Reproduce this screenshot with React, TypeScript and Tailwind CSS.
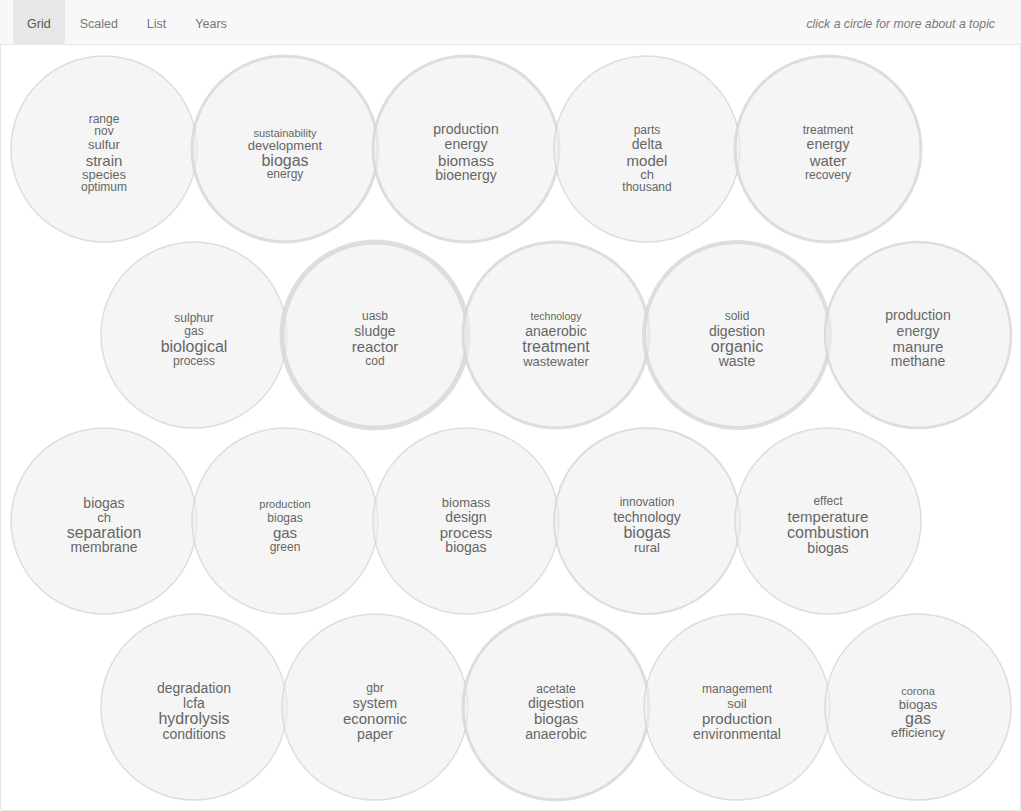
import React from "react";

type W = [string, number, number];
type C = { x: number; y: number; sw: number; words: W[] };

const circles: C[] = [
  { x: 104, y: 149, sw: 1.5, words: [["range", 119, 12], ["nov", 131, 12], ["sulfur", 144, 13], ["strain", 160, 15], ["species", 174, 13], ["optimum", 187, 12]] },
  { x: 285, y: 149, sw: 3, words: [["sustainability", 133, 11], ["development", 145, 13], ["biogas", 160, 16], ["energy", 174, 12]] },
  { x: 466, y: 149, sw: 3, words: [["production", 129, 14], ["energy", 144, 14], ["biomass", 160, 15], ["bioenergy", 175, 14]] },
  { x: 647, y: 149, sw: 1.5, words: [["parts", 130, 12], ["delta", 144, 14], ["model", 160, 15], ["ch", 174, 13], ["thousand", 187, 12]] },
  { x: 828, y: 149, sw: 3, words: [["treatment", 130, 12], ["energy", 144, 14], ["water", 160, 15], ["recovery", 175, 12]] },

  { x: 194, y: 335, sw: 1.5, words: [["sulphur", 318, 12], ["gas", 331, 12], ["biological", 346, 16], ["process", 361, 12]] },
  { x: 375, y: 335, sw: 5, words: [["uasb", 316, 12], ["sludge", 331, 14], ["reactor", 346, 15], ["cod", 361, 12]] },
  { x: 556, y: 335, sw: 3, words: [["technology", 316, 10.5], ["anaerobic", 331, 14], ["treatment", 346, 16], ["wastewater", 361, 13]] },
  { x: 737, y: 335, sw: 4, words: [["solid", 316, 12], ["digestion", 331, 14], ["organic", 346, 16], ["waste", 361, 14]] },
  { x: 918, y: 335, sw: 2.5, words: [["production", 315, 14], ["energy", 331, 14], ["manure", 346, 15], ["methane", 361, 14]] },

  { x: 104, y: 521, sw: 1.5, words: [["biogas", 503, 14], ["ch", 517, 13], ["separation", 532, 16], ["membrane", 547, 14]] },
  { x: 285, y: 521, sw: 1.5, words: [["production", 504, 11], ["biogas", 518, 12], ["gas", 532, 15], ["green", 547, 12]] },
  { x: 466, y: 521, sw: 1.5, words: [["biomass", 502, 13], ["design", 517, 14], ["process", 532, 15], ["biogas", 547, 14]] },
  { x: 647, y: 521, sw: 2, words: [["innovation", 502, 12], ["technology", 517, 14], ["biogas", 532, 16], ["rural", 547, 13]] },
  { x: 828, y: 521, sw: 1.5, words: [["effect", 501, 12], ["temperature", 516, 15], ["combustion", 532, 16], ["biogas", 548, 14]] },

  { x: 194, y: 707, sw: 1.5, words: [["degradation", 688, 14], ["lcfa", 703, 14], ["hydrolysis", 718, 16], ["conditions", 734, 14]] },
  { x: 375, y: 707, sw: 1.5, words: [["gbr", 688, 12], ["system", 703, 14], ["economic", 718, 15], ["paper", 734, 14]] },
  { x: 556, y: 707, sw: 3, words: [["acetate", 689, 12], ["digestion", 703, 14], ["biogas", 718, 15], ["anaerobic", 734, 14]] },
  { x: 737, y: 707, sw: 1.5, words: [["management", 689, 12], ["soil", 703, 13], ["production", 718, 15], ["environmental", 734, 14]] },
  { x: 918, y: 707, sw: 1.5, words: [["corona", 691, 11], ["biogas", 704, 13], ["gas", 718, 16], ["efficiency", 732, 13]] },
];

export default function App() {
  return (
    <div className="w-[1021px] h-[811px] bg-white font-['Liberation_Sans',Arial,sans-serif] overflow-hidden">
      <div className="h-[45px] bg-[#f8f8f8] border-b border-[#e7e7e7] flex items-stretch justify-between pr-[26px]">
        <div className="flex items-stretch pl-[13px] gap-[1px] text-[12.5px] text-[#777]">
          <div className="px-[14px] pt-[5px] flex items-center bg-[#e7e7e7] text-[#555] rounded-b-[4px]">Grid</div>
          <div className="px-[14px] pt-[5px] flex items-center">Scaled</div>
          <div className="px-[14px] pt-[5px] flex items-center">List</div>
          <div className="px-[14px] pt-[5px] flex items-center">Years</div>
        </div>
        <div className="flex items-center pt-[5px] italic text-[12.25px] text-[#777]">click a circle for more about a topic</div>
      </div>
      <div className="h-[766px] border-l border-r border-b border-[#e5e5e5] rounded-b-[3px]">
        <svg width="1019" height="765" viewBox="1 45 1019 765" className="block">
          {circles.map((c, i) => (
            <g key={i}>
              <circle cx={c.x} cy={c.y} r={93} fill="#eeeeee" fillOpacity={0.6} stroke="#d6d6d6" strokeOpacity={0.8} strokeWidth={c.sw} />
              {c.words.map(([w, y, s], j) => (
                <text key={j} x={c.x} y={y} fontSize={s} textAnchor="middle" dominantBaseline="central" fill="#666" fontFamily="'Liberation Sans', Arial, sans-serif">
                  {w}
                </text>
              ))}
            </g>
          ))}
        </svg>
      </div>
    </div>
  );
}
